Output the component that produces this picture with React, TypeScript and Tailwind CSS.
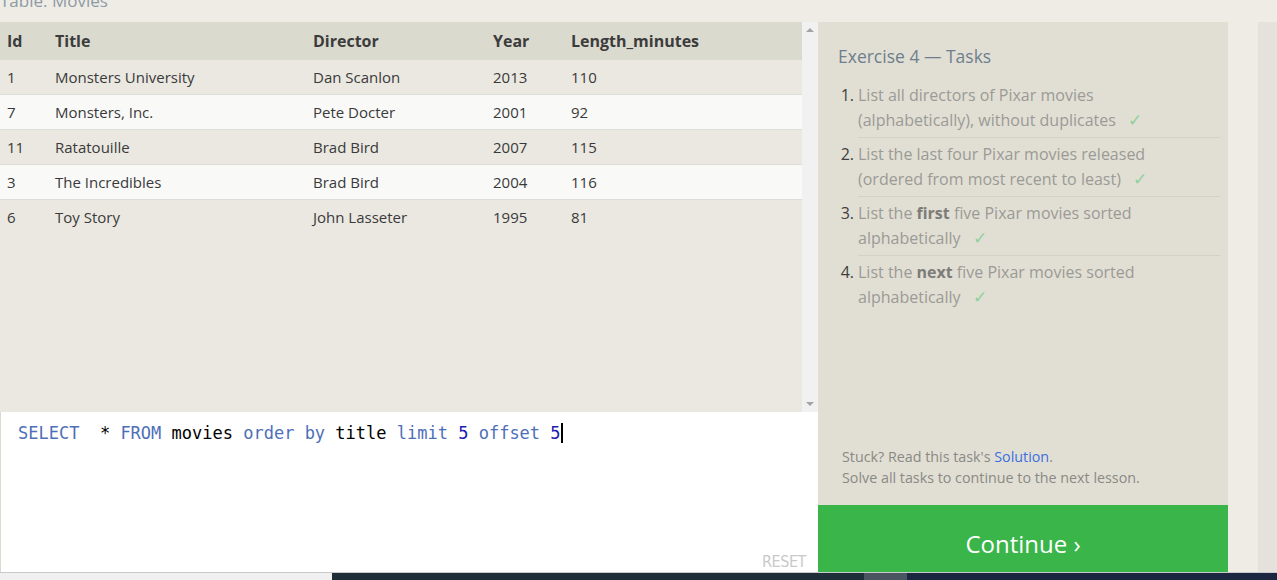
import React from 'react';

const movies = [
  { id: 1, title: 'Monsters University', director: 'Dan Scanlon', year: 2013, length: 110 },
  { id: 7, title: 'Monsters, Inc.', director: 'Pete Docter', year: 2001, length: 92 },
  { id: 11, title: 'Ratatouille', director: 'Brad Bird', year: 2007, length: 115 },
  { id: 3, title: 'The Incredibles', director: 'Brad Bird', year: 2004, length: 116 },
  { id: 6, title: 'Toy Story', director: 'John Lasseter', year: 1995, length: 81 },
];

const cols = 'grid grid-cols-[48px_258px_180px_78px_1fr]';

const tasks: React.ReactNode[] = [
  'List all directors of Pixar movies (alphabetically), without duplicates',
  'List the last four Pixar movies released (ordered from most recent to least)',
  <>
    List the <b className="text-[#7d7c78]">first</b> five Pixar movies sorted alphabetically
  </>,
  <>
    List the <b className="text-[#7d7c78]">next</b> five Pixar movies sorted alphabetically
  </>,
];

export default function App() {
  return (
    <div
      className="flex h-[580px] w-[1277px] flex-col overflow-hidden bg-[#efece5]"
      style={{ fontFamily: '"Open Sans", "Noto Sans", sans-serif' }}
    >
      {/* page caption, scrolled mostly out of view */}
      <div className="h-[22px] overflow-hidden">
        <div className="-mt-[9px] text-[17px] leading-[20px] text-[#8d9aa6]">Table: Movies</div>
      </div>

      <div className="flex h-[550px]">
        {/* left column: results + editor */}
        <div className="flex w-[818px] flex-col">
          <div className="flex h-[390px]">
            <div className="flex-1 bg-[#eae8e1] text-[15px] text-[#3a3a3a]">
              <div className={`${cols} h-[38px] items-center bg-[#dbdacf] text-[16px] font-bold text-[#3c3c3c]`}>
                <div className="pl-[7px]">Id</div>
                <div className="pl-[7px]">Title</div>
                <div className="pl-[7px]">Director</div>
                <div className="pl-[7px]">Year</div>
                <div className="pl-[7px]">Length_minutes</div>
              </div>
              {movies.map((m, i) => (
                <div
                  key={m.id}
                  className={`${cols} h-[35px] items-center ${
                    i < movies.length - 1 ? 'border-b border-[#dedcd6]' : ''
                  } ${i % 2 === 0 ? 'bg-[#eae8e1]' : 'bg-[#f9f9f8]'}`}
                >
                  <div className="pl-[7px]">{m.id}</div>
                  <div className="pl-[7px]">{m.title}</div>
                  <div className="pl-[7px]">{m.director}</div>
                  <div className="pl-[7px]">{m.year}</div>
                  <div className="pl-[7px]">{m.length}</div>
                </div>
              ))}
            </div>
            <div className="flex w-[16px] flex-col items-center justify-between bg-[#f1f1f1] py-[6px]">
              <div className="h-0 w-0 border-x-[4px] border-b-[4px] border-x-transparent border-b-[#a3a3a3]" />
              <div className="h-0 w-0 border-x-[4px] border-t-[4px] border-x-transparent border-t-[#a3a3a3]" />
            </div>
          </div>

          <div className="relative flex-1 border-l border-[#d6dccf] bg-white">
            <div
              className="pl-[17px] pt-[7px] text-[17px] leading-[24px] whitespace-pre"
              style={{ fontFamily: '"DejaVu Sans Mono", "Liberation Mono", monospace' }}
            >
              <span className="text-[#4e6fb8]">SELECT</span>
              <span className="text-black">{'  * '}</span>
              <span className="text-[#4e6fb8]">FROM</span>
              <span className="text-black"> movies </span>
              <span className="text-[#4e6fb8]">order by</span>
              <span className="text-black"> title </span>
              <span className="text-[#4e6fb8]">limit</span>
              <span className="text-[#1c1cb0]"> 5 </span>
              <span className="text-[#4e6fb8]">offset</span>
              <span className="text-[#1c1cb0]"> 5</span>
              <span className="inline-block h-[20px] w-[2px] translate-y-[4px] bg-black" />
            </div>
            <div
              className="absolute right-[12px] bottom-[-2px] text-[16px] tracking-tight text-[#c9c9c9]"
              style={{ fontFamily: '"Liberation Sans Narrow", "DejaVu Sans Condensed", sans-serif' }}
            >
              RESET
            </div>
          </div>
        </div>

        {/* right column: tasks */}
        <div className="flex w-[410px] flex-col">
          <div className="flex flex-1 flex-col bg-[#e1dfd4] pr-[8px] pl-[20px]">
            <h2 className="mt-[22px] text-[17.5px] leading-[24px] text-[#6f7e8d]">Exercise 4 — Tasks</h2>
            <ol className="mt-[11px] text-[16px] leading-[25px] text-[#9b9a96]">
              {tasks.map((t, i) => (
                <li key={i} className="flex">
                  <span className="w-[16px] shrink-0 pt-[4px] text-right text-[#3e3e3e]">{i + 1}.</span>
                  <div
                    className={`ml-[4px] flex-1 py-[4px] ${i < tasks.length - 1 ? 'border-b border-[#d4d2c7]' : ''}`}
                  >
                    <div className="max-w-[330px]">
                      {t}
                      <span className="ml-[12px] text-[17px] leading-none text-[#8fd19a]">✓</span>
                    </div>
                  </div>
                </li>
              ))}
            </ol>
            <div className="mt-auto mb-[17px] pl-[4px] text-[14.3px] leading-[21px] text-[#8a8984]">
              <div>
                Stuck? Read this task's <span className="text-[#3c6fe0]">Solution</span>.
              </div>
              <div>Solve all tasks to continue to the next lesson.</div>
            </div>
          </div>
          <button className="h-[67px] bg-[#3ab54a] pt-[10px] text-[24px] text-white">Continue ›</button>
        </div>

        <div className="w-[30px]" />
        <div className="flex-1 bg-[#e5e1dd]" />
      </div>

      {/* system taskbar strip */}
      <div className="flex flex-1 border-t border-[#c9c9c9]">
        <div className="w-[332px] bg-[#f0f0f0]" />
        <div className="w-[532px] bg-[#1f2f3a]" />
        <div className="w-[43px] bg-[#4a5561]" />
        <div className="flex-1 bg-[#1b2640]" />
      </div>
    </div>
  );
}
